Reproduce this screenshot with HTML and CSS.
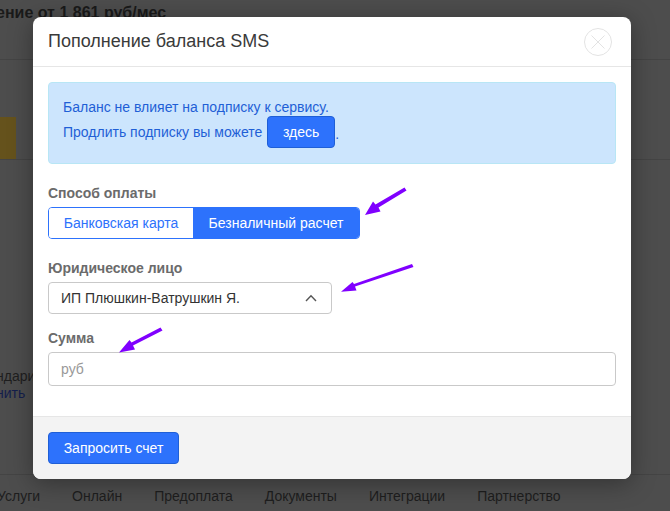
FILE: index.html
```html
<!DOCTYPE html>
<html lang="ru">
<head>
<meta charset="utf-8">
<title>Пополнение баланса SMS</title>
<link rel="stylesheet" href="styles.css">
</head>
<body>
<div class="page">
  <div class="page-head"><div class="page-title">ение от 1 861 руб/мес</div></div>
  <div class="page-band"><div class="page-yellow"></div></div>
  <div class="page-main">
    <div class="page-text">ндари</div>
    <div class="page-link">нить</div>
  </div>
  <nav class="page-nav">
    <span>Услуги</span><span>Онлайн</span><span>Предоплата</span><span>Документы</span><span>Интеграции</span><span>Партнерство</span>
  </nav>
</div>
<div class="modal">
  <header class="modal-head">
    <h1 class="modal-title">Пополнение баланса SMS</h1>
    <svg class="close" width="30" height="30" viewBox="0 0 30 30" aria-label="Закрыть">
      <circle cx="15" cy="15" r="13.5" fill="none" stroke="#e3e3e3" stroke-width="1"/>
      <path d="M8.5 8.5 L21.5 21.5 M21.5 8.5 L8.5 21.5" fill="none" stroke="#e3e3e3" stroke-width="1"/>
    </svg>
  </header>
  <div class="modal-body">
    <div class="alert">
      <div class="alert-line">Баланс не влияет на подписку к сервису.</div>
      <div class="alert-line">Продлить подписку вы можете <a class="btn btn-here">здесь</a><span class="alert-dot">.</span></div>
    </div>
    <div class="field field-pay">
      <div class="label">Способ оплаты</div>
      <div class="seg">
        <span class="seg-item">Банковская карта</span><span class="seg-item seg-on">Безналичный расчет</span>
      </div>
    </div>
    <div class="field field-entity">
      <div class="label">Юридическое лицо</div>
      <div class="select">
        <span>ИП Плюшкин-Ватрушкин Я.</span>
        <svg width="12" height="8" viewBox="0 0 12 8"><path d="M1 7 L6 1.8 L11 7" fill="none" stroke="#555" stroke-width="1.4"/></svg>
      </div>
    </div>
    <div class="field field-sum">
      <div class="label">Сумма</div>
      <div class="input">руб</div>
    </div>
  </div>
  <footer class="modal-foot"><a class="btn btn-submit">Запросить счет</a></footer>
</div>
<svg class="arrows" width="670" height="511" viewBox="0 0 670 511">
  <g fill="#8000ff" stroke="none">
    <path d="M404.500 187.500 L406.500 190.500 L378.500 207.500 L380.500 211.500 L365 215 L373 201.500 L375.500 204.500 Z"/>
    <path d="M412 264 L413.500 267 L355 286.500 L356.500 290.500 L341 291.700 L352.500 282 L354 284 Z"/>
    <path d="M160.500 327.500 L162.500 330.500 L133 345.500 L135 349.500 L119 352.500 L129.500 340 L131.500 342.500 Z"/>
  </g>
</svg>
</body>
</html>
```
FILE: styles.css
```css
* { box-sizing: border-box; }
html, body { margin: 0; height: 100%; }
body {
  width: 670px;
  height: 511px;
  overflow: hidden;
  position: relative;
  background: #4d4d4d;
  font-family: "Liberation Sans", Arial, sans-serif;
  color: #212529;
}
.page { height: 511px; display: flex; flex-direction: column; overflow: hidden; }
.page-head { height: 60px; border-bottom: 1px solid #444; padding-top: 3px; margin-left: -4px; }
.page-title { font-size: 16px; font-weight: 700; color: #1a1a1a; line-height: 20px; }
.page-band { height: 100px; border-bottom: 1px solid #444; padding-top: 57px; }
.page-yellow { width: 16px; height: 42px; background: #65521c; }
.page-main { flex: 1; padding-top: 208px; margin-left: -4px; font-size: 14px; line-height: 17px; }
.page-text { color: #1e1e1e; }
.page-link { color: #141e4c; }
.page-nav {
  height: 37px;
  border-top: 1px solid #444;
  display: flex;
  gap: 32px;
  padding: 12px 0 0;
  margin-left: -3px;
  font-size: 14px;
  line-height: 18px;
  color: #1e1e1e;
}
.modal {
  position: absolute;
  left: 33px;
  top: 17px;
  width: 598px;
  height: 462px;
  background: #fff;
  border-radius: 8px;
  box-shadow: 0 4px 24px rgba(0,0,0,.35);
  display: flex;
  flex-direction: column;
  overflow: hidden;
}
.modal-head {
  height: 50px;
  flex: none;
  border-bottom: 1px solid #e6e6e6;
  display: flex;
  justify-content: space-between;
  align-items: center;
  padding: 0 18px 0 15px;
}
.modal-title { margin: 0 0 1px; font-size: 18px; font-weight: 400; line-height: 22px; color: #3a3a3a; }
.close { display: block; }
.modal-body { flex: 1; padding: 15px; }
.alert {
  height: 82px;
  background: #cce5fd;
  border: 1px solid #b8e6f5;
  border-radius: 4px;
  padding: 12px 14px 0;
  color: #1f5fd6;
  font-size: 14px;
}
.alert-line { line-height: 24px; display: flex; align-items: center; white-space: pre; }
.alert-line + .alert-line { margin-top: -3px; }
.btn {
  display: inline-block;
  background: #2d72fc;
  border: 1px solid #1f5fd6;
  border-radius: 4px;
  color: #fff;
  font-size: 14px;
}
.btn-here { width: 68px; height: 32px; line-height: 30px; text-align: center; margin-left: 1px; }
.alert-dot { align-self: flex-end; line-height: 28px; }
.field { display: flex; flex-direction: column; }
.field-pay { margin-top: 21px; }
.field-entity { margin-top: 21px; }
.field-sum { margin-top: 16px; }
.label { font-size: 14px; font-weight: 700; color: #6b6b6b; line-height: 16px; }
.seg {
  display: flex;
  width: 312px;
  height: 32px;
  margin-top: 6px;
  border: 1px solid #2d72fc;
  border-radius: 4px;
  overflow: hidden;
  font-size: 14px;
  line-height: 30px;
  text-align: center;
}
.seg-item { width: 144px; color: #2d72fc; background: #fff; }
.seg-on { width: 166px; color: #fff; background: #2d72fc; }
.select {
  display: flex;
  justify-content: space-between;
  align-items: center;
  width: 284px;
  height: 32px;
  margin-top: 6px;
  padding: 0 14px 0 12px;
  border: 1px solid #c9c9c9;
  border-radius: 4px;
  font-size: 14px;
  color: #333;
}
.input {
  height: 34px;
  margin-top: 6px;
  padding: 0 12px;
  border: 1px solid #c9c9c9;
  border-radius: 4px;
  font-size: 14px;
  line-height: 32px;
  color: #999;
}
.modal-foot {
  height: 63px;
  flex: none;
  background: #f3f3f3;
  border-top: 1px solid #e6e6e6;
  padding: 15px;
}
.btn-submit { width: 131px; height: 32px; line-height: 30px; text-align: center; display: block; }
.arrows { position: absolute; left: 0; top: 0; pointer-events: none; }
```
